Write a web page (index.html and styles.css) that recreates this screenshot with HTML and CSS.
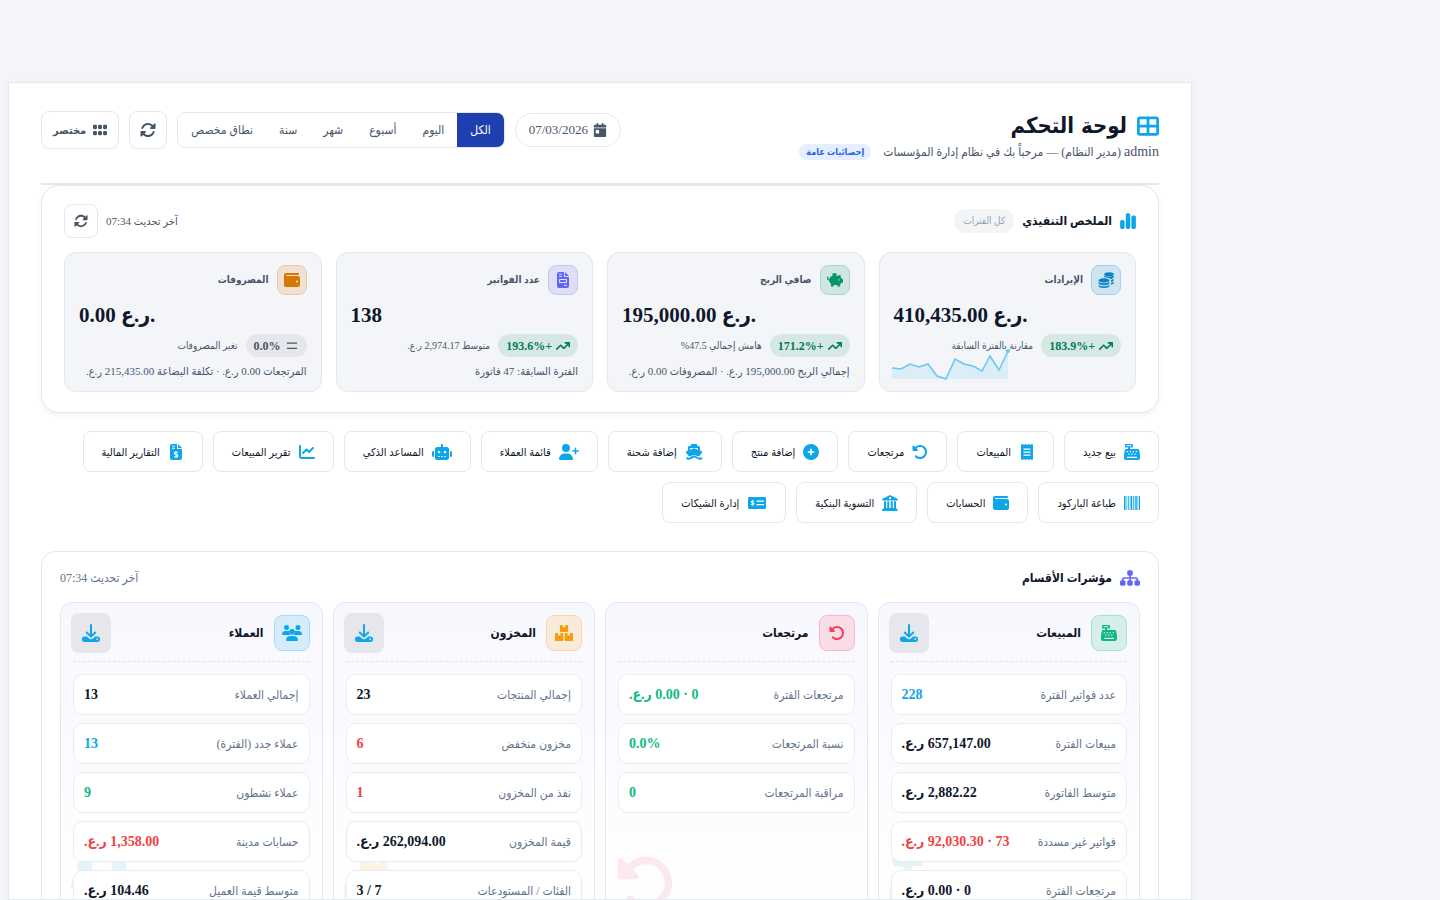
FILE: index.html
```html
<!DOCTYPE html>
<html lang="ar" dir="rtl">
<head>
    <meta charset="UTF-8">
    <meta name="viewport" content="width=device-width, initial-scale=1.0">
    <title>لوحة التحكم</title>
    <link rel="stylesheet" href="styles.css">
</head>
<body>
    <svg class="sprite" aria-hidden="true">
        <symbol id="i-grid" viewBox="0 0 512 512"><path d="M448 96V224H288V96H448zm0 192V416H288V288H448zM224 224H64V96H224V224zM64 288H224V416H64V288zM64 32C28.7 32 0 60.7 0 96V416c0 35.3 28.7 64 64 64H448c35.3 0 64-28.7 64-64V96c0-35.3-28.7-64-64-64H64z" fill-rule="evenodd"/></symbol>
        <symbol id="i-sync" viewBox="0 0 512 512"><path d="M142.9 142.9c62.2-62.2 162.7-62.5 225.3-1L327 183c-6.9 6.9-8.9 17.2-5.2 26.2s12.5 14.8 22.2 14.8H472c13.3 0 24-10.7 24-24V72c0-9.7-5.8-18.5-14.8-22.2s-19.3-1.7-26.2 5.2L413.4 96.6c-87.6-86.5-228.7-86.2-315.8 1C73.2 122 55.6 150.7 44.8 181.4c-5.9 16.7 2.9 34.9 19.5 40.8s34.9-2.9 40.8-19.5c7.7-21.8 20.2-42.3 37.8-59.8zM16 312V440c0 9.7 5.8 18.5 14.8 22.2s19.3 1.7 26.2-5.2l41.6-41.6c87.6 86.5 228.7 86.2 315.8-1c24.4-24.4 42.1-53.1 52.9-83.7c5.9-16.7-2.9-34.9-19.5-40.8s-34.9 2.9-40.8 19.5c-7.7 21.8-20.2 42.3-37.8 59.8c-62.2 62.2-162.7 62.5-225.3 1L185 329c6.9-6.9 8.9-17.2 5.2-26.2s-12.5-14.8-22.2-14.8H40c-13.3 0-24 10.7-24 24z"/></symbol>
        <symbol id="i-undo" viewBox="0 0 512 512"><path d="M48.5 224H40c-13.3 0-24-10.7-24-24V72c0-9.7 5.8-18.5 14.8-22.2s19.3-1.7 26.2 5.2L98.6 96.6c87.6-86.5 228.7-86.2 315.8 1c87.5 87.5 87.5 229.3 0 316.8s-229.3 87.5-316.8 0c-12.5-12.5-12.5-32.8 0-45.3s32.8-12.5 45.3 0c62.5 62.5 163.8 62.5 226.3 0s62.5-163.8 0-226.3c-62.2-62.2-162.7-62.5-225.3-1L185 183c6.9 6.9 8.9 17.2 5.2 26.2s-12.5 14.8-22.2 14.8H48.5z"/></symbol>
        <symbol id="i-dots" viewBox="0 0 512 512"><g><rect x="0" y="64" width="144" height="160" rx="48"/><rect x="184" y="64" width="144" height="160" rx="48"/><rect x="368" y="64" width="144" height="160" rx="48"/><rect x="0" y="288" width="144" height="160" rx="48"/><rect x="184" y="288" width="144" height="160" rx="48"/><rect x="368" y="288" width="144" height="160" rx="48"/></g></symbol>
        <symbol id="i-calendar" viewBox="0 0 448 512"><path d="M128 0c17.7 0 32 14.3 32 32V64H288V32c0-17.7 14.3-32 32-32s32 14.3 32 32V64h48c26.5 0 48 21.5 48 48v48H0V112C0 85.5 21.5 64 48 64H96V32c0-17.7 14.3-32 32-32zM0 192H448V464c0 26.5-21.5 48-48 48H48c-26.5 0-48-21.5-48-48V192zm80 64c-8.8 0-16 7.2-16 16v96c0 8.8 7.2 16 16 16h96c8.8 0 16-7.2 16-16V272c0-8.8-7.2-16-16-16H80z" fill-rule="evenodd"/></symbol>
        <symbol id="i-bars" viewBox="0 0 448 512"><path d="M160 80c0-26.5 21.5-48 48-48h32c26.5 0 48 21.5 48 48V432c0 26.5-21.5 48-48 48H208c-26.5 0-48-21.5-48-48V80zM0 272c0-26.5 21.5-48 48-48H80c26.5 0 48 21.5 48 48V432c0 26.5-21.5 48-48 48H48c-26.5 0-48-21.5-48-48V272zM368 96h32c26.5 0 48 21.5 48 48V432c0 26.5-21.5 48-48 48H368c-26.5 0-48-21.5-48-48V144c0-26.5 21.5-48 48-48z"/></symbol>
        <symbol id="i-coins" viewBox="0 0 512 512"><ellipse cx="352" cy="72" rx="150" ry="64"/><path d="M206 122c42 34 250 34 296 0v30c0 46-56 66-112 68-36-36-92-50-184-46zM414 252c40-4 66-14 88-30v34c0 30-34 50-84 58zM418 344c36-6 64-16 84-30v32c0 30-34 52-84 60z"/><ellipse cx="192" cy="270" rx="176" ry="68"/><path d="M16 318c60 60 292 60 352 0v44c0 80-352 80-352 0zM16 412c60 58 292 58 352 0v36c0 82-352 82-352 0z"/></symbol>
        <symbol id="i-pig" viewBox="0 0 576 512"><ellipse cx="270" cy="62" rx="84" ry="58"/><path d="M410 100c22-24 48-36 78-36v84c24 20 40 42 48 68h24c10 0 16 8 16 18v104c0 10-6 18-16 18h-38c-12 20-28 34-46 46v70c0 14-8 22-22 22h-60c-14 0-22-8-22-22v-40H244v40c0 14-8 22-22 22h-58c-14 0-22-8-22-22v-80c-44-34-66-78-70-124C22 264 0 230 0 190c0-34 26-56 54-56v44c-18 2-20 24-4 38 8 8 18 12 28 10 18-76 78-126 156-126zM432 230a24 24 0 1 0 1 0z" fill-rule="evenodd"/></symbol>
        <symbol id="i-invoice" viewBox="0 0 384 512"><path d="M64 0C29 0 0 29 0 64v384c0 35 29 64 64 64h256c35 0 64-29 64-64V160H256c-18 0-32-14-32-32V0zM256 0v128h128zM64 80h96v-28H64zM64 150h96v-28H64zM96 224h192c18 0 32 14 32 32v64c0 18-14 32-32 32H96c-18 0-32-14-32-32v-64c0-18 14-32 32-32zM100 258v60h184v-60zM224 442h96v-32h-96z" fill-rule="evenodd"/></symbol>
        <symbol id="i-report" viewBox="0 0 384 512"><path d="M64 0C29 0 0 29 0 64v384c0 35 29 64 64 64h256c35 0 64-29 64-64V160H256c-18 0-32-14-32-32V0zM256 0v128h128zM64 80h96v-28H64zM64 150h96v-28H64z" fill-rule="evenodd"/><path class="knock" d="M250 274c-44-26-106-20-106 26 0 54 108 26 108 78 0 48-70 48-112 20M196 228v216"/></symbol>
        <symbol id="i-wallet" viewBox="0 0 512 512"><path d="M64 32C28.7 32 0 60.7 0 96V416c0 35.3 28.7 64 64 64H448c35.3 0 64-28.7 64-64V192c0-35.3-28.7-64-64-64H80c-8.8 0-16-7.2-16-16s7.2-16 16-16H448c17.7 0 32-14.3 32-32s-14.3-32-32-32H64zM416 272a32 32 0 1 1 0 64 32 32 0 1 1 0-64z" fill-rule="evenodd"/></symbol>
        <symbol id="i-trend" viewBox="0 0 576 512"><path d="M384 160c-17.7 0-32-14.3-32-32s14.3-32 32-32H544c17.7 0 32 14.3 32 32V288c0 17.7-14.3 32-32 32s-32-14.3-32-32V205.3L342.6 374.6c-12.5 12.5-32.8 12.5-45.3 0L192 269.3 54.6 406.6c-12.5 12.5-32.8 12.5-45.3 0s-12.5-32.8 0-45.3l160-160c12.5-12.5 32.8-12.5 45.3 0L320 306.7 466.7 160H384z"/></symbol>
        <symbol id="i-equal" viewBox="0 0 448 512"><path d="M40 128h368v48H40zM40 320h368v48H40z"/></symbol>
        <symbol id="i-register" viewBox="0 0 512 512"><path d="M64 0h192c18 0 32 14 32 32v48c0 18-14 32-32 32h-64v48h236c32 0 56 20 62 50l22 150v88c0 36-28 64-64 64H64c-36 0-64-28-64-64v-88l22-150c6-30 30-50 62-50h44v-48H64c-18 0-32-14-32-32V32C32 14 46 0 64 0zM80 40v32h160V40zM88 220v40h40v-40zM184 220v40h40v-40zM280 220v40h40v-40zM376 220v40h40v-40zM136 300v40h40v-40zM232 300v40h40v-40zM328 300v40h40v-40zM96 408v40h320v-40z" fill-rule="evenodd"/></symbol>
        <symbol id="i-receipt" viewBox="0 0 384 512"><path d="M0 16 48 0l48 32 48-32 48 32 48-32 48 32 48-32 48 16v480l-48 16-48-32-48 32-48-32-48 32-48-32-48 32-48-16zM80 144v36h224v-36zM80 240v36h224v-36zM80 336v36h224v-36z" fill-rule="evenodd"/></symbol>
        <symbol id="i-plus" viewBox="0 0 512 512"><path d="M256 512A256 256 0 1 0 256 0a256 256 0 1 0 0 512zM232 344V280H168c-13.3 0-24-10.7-24-24s10.7-24 24-24h64V168c0-13.3 10.7-24 24-24s24 10.7 24 24v64h64c13.3 0 24 10.7 24 24s-10.7 24-24 24H280v64c0 13.3-10.7 24-24 24s-24-10.7-24-24z" fill-rule="evenodd"/></symbol>
        <symbol id="i-ship" viewBox="0 0 576 512"><path d="M220 0h136c20 0 36 14 36 34v30h40c28 0 48 20 48 48v96l50 20c24 10 28 30 12 50l-74 100c-32 24-60 24-100-4-50-34-110-34-160 0-40 28-68 28-100 4L34 278c-16-20-12-40 12-50l50-20v-96c0-28 20-48 48-48h40V34c0-20 16-34 36-34zM160 128v56l128-46 128 46v-56z" fill-rule="evenodd"/><path d="M192 408c60-50 132-50 192 0 44 36 92 40 132 6l40 34c6 30-8 44-28 44-50 16-110 10-156-28-48-40-96-40-144 0-46 38-106 44-156 28-26 0-38-18-32-44l36-34c44 34 72 30 116-6z"/></symbol>
        <symbol id="i-userplus" viewBox="0 0 640 512"><path d="M96 128a128 128 0 1 1 256 0A128 128 0 1 1 96 128zM0 482.3C0 383.8 79.8 304 178.3 304h91.4C368.2 304 448 383.8 448 482.3c0 16.4-13.3 29.7-29.7 29.7H29.7C13.3 512 0 498.7 0 482.3zM504 312V248H440c-13.3 0-24-10.7-24-24s10.7-24 24-24h64V136c0-13.3 10.7-24 24-24s24 10.7 24 24v64h64c13.3 0 24 10.7 24 24s-10.7 24-24 24H552v64c0 13.3-10.7 24-24 24s-24-10.7-24-24z"/></symbol>
        <symbol id="i-robot" viewBox="0 0 640 512"><path d="M320 0c18 0 32 14 32 32v64h120c40 0 72 32 72 72v272c0 40-32 72-72 72H168c-40 0-72-32-72-72V168c0-40 32-72 72-72h120V32c0-18 14-32 32-32zM224 216a40 40 0 1 0 1 0zM416 216a40 40 0 1 0 1 0zM200 384v32h48v-32zM296 384v32h48v-32zM392 384v32h48v-32zM64 224v192H48c-26 0-48-22-48-48v-96c0-26 22-48 48-48zM576 224h16c26 0 48 22 48 48v96c0 26-22 48-48 48h-16z" fill-rule="evenodd"/></symbol>
        <symbol id="i-line" viewBox="0 0 512 512"><path d="M64 64c0-17.7-14.3-32-32-32S0 46.3 0 64V400c0 44.2 35.8 80 80 80H480c17.7 0 32-14.3 32-32s-14.3-32-32-32H80c-8.8 0-16-7.2-16-16V64zm406.6 86.6c12.5-12.5 12.5-32.8 0-45.3s-32.8-12.5-45.3 0L320 210.7l-57.4-57.4c-12.5-12.5-32.8-12.5-45.3 0l-112 112c-12.5 12.5-12.5 32.8 0 45.3s32.8 12.5 45.3 0L240 221.3l57.4 57.4c12.5 12.5 32.8 12.5 45.3 0l128-128z"/></symbol>
        <symbol id="i-barcode" viewBox="0 0 512 512"><path d="M0 32h48v448H0zM80 32h24v448H80zM136 32h32v448h-32zM208 32h56v448h-56zM296 32h32v448h-32zM360 32h48v448h-48zM432 32h24v448h-24zM480 32h32v448h-32z"/></symbol>
        <symbol id="i-bank" viewBox="0 0 512 512"><path d="M243 4c8-5 18-5 26 0l224 112c26 16 20 60-14 60H32c-34 0-40-44-14-60zM256 66a34 34 0 1 0 1 0zM64 200h64v216h40V200h64v216h48V200h64v216h40V200h64v224l44 32c20 16 12 56-18 56H32c-30 0-38-40-18-56l50-32z" fill-rule="evenodd"/></symbol>
        <symbol id="i-check" viewBox="0 0 576 512"><path d="M48 64h480c27 0 48 21 48 48v288c0 27-21 48-48 48H48c-27 0-48-21-48-48V112c0-27 21-48 48-48zM272 176v40h240v-40zM272 284v40h240v-40z" fill-rule="evenodd"/><path class="knock" d="M188 204c-34-20-80-14-80 18 0 38 82 20 82 58 0 36-54 36-86 16M148 160v182"/></symbol>
        <symbol id="i-sitemap" viewBox="0 0 576 512"><path d="M208 80c0-26.5 21.5-48 48-48h64c26.5 0 48 21.5 48 48v64c0 26.5-21.5 48-48 48h-8v40H464c30.9 0 56 25.1 56 56v32h8c26.5 0 48 21.5 48 48v64c0 26.5-21.5 48-48 48H464c-26.5 0-48-21.5-48-48V368c0-26.5 21.5-48 48-48h8V288c0-4.4-3.6-8-8-8H312v40h8c26.5 0 48 21.5 48 48v64c0 26.5-21.5 48-48 48H256c-26.5 0-48-21.5-48-48V368c0-26.5 21.5-48 48-48h8V280H112c-4.4 0-8 3.6-8 8v32h8c26.5 0 48 21.5 48 48v64c0 26.5-21.5 48-48 48H48c-26.5 0-48-21.5-48-48V368c0-26.5 21.5-48 48-48h8V288c0-30.9 25.1-56 56-56H264V192h-8c-26.5 0-48-21.5-48-48V80z"/></symbol>
        <symbol id="i-boxes" viewBox="0 0 576 512"><path d="M192 0h56v78l40-22 40 22V0h56c20 0 36 16 36 36v152c0 20-16 36-36 36H192c-20 0-36-16-36-36V36c0-20 16-36 36-36zM36 256h58v84l40-22 40 22v-84h58c20 0 36 16 36 36v184c0 20-16 36-36 36H36c-20 0-36-16-36-36V292c0-20 16-36 36-36zM344 256h58v84l40-22 40 22v-84h58c20 0 36 16 36 36v184c0 20-16 36-36 36H344c-20 0-36-16-36-36V292c0-20 16-36 36-36z"/></symbol>
        <symbol id="i-users" viewBox="0 0 640 512"><circle cx="144" cy="80" r="80"/><circle cx="512" cy="80" r="80"/><circle cx="320" cy="216" r="92"/><path d="M107 192h86c16 0 30 4 42 10-16 50-2 88 38 118H22c-12 0-22-10-22-22 0-58 48-106 107-106zM447 192h86c59 0 107 48 107 106 0 12-10 22-22 22H367c40-30 54-68 38-118 12-6 26-10 42-10zM262 352h116c74 0 134 60 134 134 0 14-12 26-26 26H154c-14 0-26-12-26-26 0-74 60-134 134-134z"/></symbol>
        <symbol id="i-download" viewBox="0 0 512 512"><path d="M64 352h72l56 56c36 36 92 36 128 0l56-56h72c36 0 64 28 64 64v32c0 36-28 64-64 64H64c-36 0-64-28-64-64v-32c0-36 28-64 64-64zM432 408a24 24 0 1 0 1 0z" fill-rule="evenodd"/><path class="stroke" d="M256 28v320M136 240l120 118 120-118"/></symbol>
    </svg>

    <main class="dashboard">
        <header class="page-header">
            <div class="page-heading">
                <h1><svg class="icon icon-title"><use href="#i-grid"/></svg>لوحة التحكم</h1>
                <div class="subtitle">
                    <span><span class="user">admin</span> (مدير النظام) — مرحباً بك في نظام إدارة المؤسسات</span>
                    <span class="tag">إحصائيات عامة</span>
                </div>
            </div>
            <div class="toolbar">
                <span class="date-pill"><svg class="icon icon-sm"><use href="#i-calendar"/></svg>07/03/2026</span>
                <div class="periods">
                    <button type="button" class="active">الكل</button>
                    <button type="button">اليوم</button>
                    <button type="button">أسبوع</button>
                    <button type="button">شهر</button>
                    <button type="button">سنة</button>
                    <button type="button">نطاق مخصص</button>
                </div>
                <button type="button" class="tool-btn square" aria-label="تحديث"><svg class="icon"><use href="#i-sync"/></svg></button>
                <button type="button" class="tool-btn"><svg class="icon icon-sm"><use href="#i-dots"/></svg>مختصر</button>
            </div>
        </header>

        <section class="summary">
            <div class="section-head">
                <h2><svg class="icon icon-bars sky"><use href="#i-bars"/></svg>الملخص التنفيذي</h2>
                <span class="scope">كل الفترات</span>
                <span class="updated dark">آخر تحديث 07:34</span>
                <button type="button" class="tool-btn small" aria-label="تحديث الملخص"><svg class="icon icon-sm"><use href="#i-sync"/></svg></button>
            </div>
            <div class="metrics">
                <article class="metric">
                    <div class="metric-head"><span class="badge blue"><svg class="icon"><use href="#i-coins"/></svg></span><h3>الإيرادات</h3></div>
                    <div class="amount" dir="ltr">410,435.00 ر.ع.</div>
                    <div class="trend"><span class="chip up"><svg class="icon icon-sm"><use href="#i-trend"/></svg>+183.9%</span><span>مقارنة بالفترة السابقة</span></div>
                    <svg class="sparkline" viewBox="0 0 120 32">
                        <path d="M1 20 10 21 19 16 28 19 37 16 46 28 55 31 64 11 73 16 82 18 91 23 99 8 108 22 117 3V31H1z" fill="#0ea5e9" opacity=".1"/>
                        <path d="M1 20 10 21 19 16 28 19 37 16 46 28 55 31 64 11 73 16 82 18 91 23 99 8 108 22 117 3" fill="none" stroke="#64c8f5" stroke-width="1.5"/>
                        <circle cx="117" cy="3" r="2" fill="#64c8f5"/>
                    </svg>
                </article>
                <article class="metric">
                    <div class="metric-head"><span class="badge green"><svg class="icon"><use href="#i-pig"/></svg></span><h3>صافي الربح</h3></div>
                    <div class="amount" dir="ltr">195,000.00 ر.ع.</div>
                    <div class="trend"><span class="chip up"><svg class="icon icon-sm"><use href="#i-trend"/></svg>+171.2%</span><span>هامش إجمالي 47.5%</span></div>
                    <p>إجمالي الربح 195,000.00 ر.ع. · المصروفات 0.00 ر.ع.</p>
                </article>
                <article class="metric">
                    <div class="metric-head"><span class="badge indigo"><svg class="icon"><use href="#i-invoice"/></svg></span><h3>عدد الفواتير</h3></div>
                    <div class="amount" dir="ltr">138</div>
                    <div class="trend"><span class="chip up"><svg class="icon icon-sm"><use href="#i-trend"/></svg>+193.6%</span><span>متوسط 2,974.17 ر.ع.</span></div>
                    <p>الفترة السابقة: 47 فاتورة</p>
                </article>
                <article class="metric">
                    <div class="metric-head"><span class="badge orange"><svg class="icon"><use href="#i-wallet"/></svg></span><h3>المصروفات</h3></div>
                    <div class="amount" dir="ltr">0.00 ر.ع.</div>
                    <div class="trend"><span class="chip"><svg class="icon icon-sm"><use href="#i-equal"/></svg>0.0%</span><span>تغير المصروفات</span></div>
                    <p>المرتجعات 0.00 ر.ع. · تكلفة البضاعة 215,435.00 ر.ع.</p>
                </article>
            </div>
        </section>

        <nav class="quick">
            <a href="#"><svg class="icon"><use href="#i-register"/></svg>بيع جديد</a>
            <a href="#"><svg class="icon"><use href="#i-receipt"/></svg>المبيعات</a>
            <a href="#"><svg class="icon"><use href="#i-undo"/></svg>مرتجعات</a>
            <a href="#"><svg class="icon"><use href="#i-plus"/></svg>إضافة منتج</a>
            <a href="#"><svg class="icon icon-ship"><use href="#i-ship"/></svg>إضافة شحنة</a>
            <a href="#"><svg class="icon icon-wide"><use href="#i-userplus"/></svg>قائمة العملاء</a>
            <a href="#"><svg class="icon icon-wide"><use href="#i-robot"/></svg>المساعد الذكي</a>
            <a href="#"><svg class="icon"><use href="#i-line"/></svg>تقرير المبيعات</a>
            <a href="#"><svg class="icon"><use href="#i-report"/></svg>التقارير المالية</a>
            <a href="#"><svg class="icon"><use href="#i-barcode"/></svg>طباعة الباركود</a>
            <a href="#"><svg class="icon"><use href="#i-wallet"/></svg>الحسابات</a>
            <a href="#"><svg class="icon"><use href="#i-bank"/></svg>التسوية البنكية</a>
            <a href="#"><svg class="icon icon-wide"><use href="#i-check"/></svg>إدارة الشيكات</a>
        </nav>

        <section class="departments">
            <div class="section-head">
                <h2><svg class="icon icon-head violet"><use href="#i-sitemap"/></svg>مؤشرات الأقسام</h2>
                <span class="updated">آخر تحديث 07:34</span>
            </div>
            <div class="columns">
                <article class="column">
                    <svg class="watermark emerald"><use href="#i-register"/></svg>
                    <div class="column-head">
                        <span class="badge large emerald"><svg class="icon"><use href="#i-register"/></svg></span>
                        <h3>المبيعات</h3>
                        <button type="button" class="download" aria-label="تنزيل المبيعات"><svg class="icon"><use href="#i-download"/></svg></button>
                    </div>
                    <dl>
                        <div><dt>عدد فواتير الفترة</dt><dd class="info">228</dd></div>
                        <div><dt>مبيعات الفترة</dt><dd>657,147.00 ر.ع.</dd></div>
                        <div><dt>متوسط الفاتورة</dt><dd>2,882.22 ر.ع.</dd></div>
                        <div><dt>فواتير غير مسددة</dt><dd class="bad">73 · 92,030.30 ر.ع.</dd></div>
                        <div><dt>مرتجعات الفترة</dt><dd>0 · 0.00 ر.ع.</dd></div>
                    </dl>
                </article>
                <article class="column">
                    <svg class="watermark rose"><use href="#i-undo"/></svg>
                    <div class="column-head">
                        <span class="badge large rose"><svg class="icon"><use href="#i-undo"/></svg></span>
                        <h3>مرتجعات</h3>
                    </div>
                    <dl>
                        <div><dt>مرتجعات الفترة</dt><dd class="good">0 · 0.00 ر.ع.</dd></div>
                        <div><dt>نسبة المرتجعات</dt><dd class="good">0.0%</dd></div>
                        <div><dt>مراقبة المرتجعات</dt><dd class="good">0</dd></div>
                    </dl>
                </article>
                <article class="column">
                    <svg class="watermark amber"><use href="#i-boxes"/></svg>
                    <div class="column-head">
                        <span class="badge large amber"><svg class="icon icon-wide"><use href="#i-boxes"/></svg></span>
                        <h3>المخزون</h3>
                        <button type="button" class="download" aria-label="تنزيل المخزون"><svg class="icon"><use href="#i-download"/></svg></button>
                    </div>
                    <dl>
                        <div><dt>إجمالي المنتجات</dt><dd>23</dd></div>
                        <div><dt>مخزون منخفض</dt><dd class="bad">6</dd></div>
                        <div><dt>نفذ من المخزون</dt><dd class="bad">1</dd></div>
                        <div><dt>قيمة المخزون</dt><dd>262,094.00 ر.ع.</dd></div>
                        <div><dt>الفئات / المستودعات</dt><dd>7 / 3</dd></div>
                    </dl>
                </article>
                <article class="column">
                    <svg class="watermark sky"><use href="#i-users"/></svg>
                    <div class="column-head">
                        <span class="badge large sky"><svg class="icon icon-wide"><use href="#i-users"/></svg></span>
                        <h3>العملاء</h3>
                        <button type="button" class="download" aria-label="تنزيل العملاء"><svg class="icon"><use href="#i-download"/></svg></button>
                    </div>
                    <dl>
                        <div><dt>إجمالي العملاء</dt><dd>13</dd></div>
                        <div><dt>عملاء جدد (الفترة)</dt><dd class="info">13</dd></div>
                        <div><dt>عملاء نشطون</dt><dd class="good">9</dd></div>
                        <div><dt>حسابات مدينة</dt><dd class="bad">1,358.00 ر.ع.</dd></div>
                        <div><dt>متوسط قيمة العميل</dt><dd>104.46 ر.ع.</dd></div>
                    </dl>
                </article>
            </div>
        </section>
    </main>
</body>
</html>
```
FILE: styles.css
```css
* {
    box-sizing: border-box;
}
body {
    margin: 0;
    padding: 82px 248px 0 8px;
    background: #f3f5f9;
    color: #0f172a;
    font-family: "Liberation Serif", "DejaVu Sans Condensed", serif;
    font-size: 12px;
    line-height: 20px;
}
h1, h2, h3, p, dl, dd {
    margin: 0;
}
button {
    font: inherit;
    color: #475569;
    background: #fff;
    border: 1px solid #e2e8f0;
    cursor: pointer;
}
.sprite {
    display: none;
}
.icon {
    width: 16px;
    height: 16px;
    fill: currentColor;
    flex: none;
}
.icon-sm {
    width: 14px;
    height: 14px;
}
.icon-ship {
    width: 18px;
}
.icon-wide {
    width: 20px;
}
.icon-head {
    width: 20px;
    height: 18px;
}
.icon-bars {
    height: 18px;
}
.icon-title {
    width: 22px;
    height: 22px;
    color: #0ea5e9;
}
.knock {
    fill: none;
    stroke: #fff;
    stroke-width: 34;
}
.stroke {
    fill: none;
    stroke: currentColor;
    stroke-width: 56;
    stroke-linecap: round;
    stroke-linejoin: round;
}
.dashboard {
    height: calc(100vh - 82px);
    overflow: hidden;
    padding: 28px 32px;
    background: #fff;
    border: 1px solid #e2e8f0;
    box-shadow: 0 2px 8px rgba(15, 23, 42, 0.05);
}

/* header */
.page-header {
    display: flex;
    justify-content: space-between;
    align-items: flex-start;
    padding-bottom: 20px;
    border-bottom: 2px solid #e2e8f0;
}
h1 {
    display: flex;
    align-items: center;
    gap: 10px;
    font-family: "DejaVu Sans Condensed", sans-serif;
    font-size: 22px;
    line-height: 30px;
}
.subtitle {
    display: flex;
    align-items: center;
    gap: 12px;
    color: #475569;
    font-size: 12px;
    line-height: 22px;
}
.user {
    font-size: 14px;
}
.tag {
    padding: 0 7px;
    border-radius: 8px;
    background: #e6efff;
    color: #2563eb;
    font-size: 9px;
    font-weight: bold;
    line-height: 16px;
}
.toolbar {
    display: flex;
    align-items: center;
    gap: 10px;
}
.date-pill {
    display: flex;
    align-items: center;
    gap: 5px;
    height: 34px;
    padding: 0 13px;
    border: 1px solid #e2e8f0;
    border-radius: 17px;
    color: #475569;
    font-size: 13px;
}
.periods {
    display: flex;
    height: 36px;
    overflow: hidden;
    border: 1px solid #e2e8f0;
    border-radius: 8px;
}
.periods button {
    padding: 0 13px;
    border: 0;
    font-size: 12px;
}
.periods .active {
    background: #1e40af;
    color: #fff;
}
.tool-btn {
    display: flex;
    align-items: center;
    justify-content: center;
    gap: 7px;
    height: 38px;
    padding: 0 11px;
    border-radius: 8px;
    font-size: 11px;
    font-weight: bold;
}
.tool-btn.square {
    width: 38px;
    padding: 0;
}
.tool-btn.small {
    width: 34px;
    height: 34px;
    padding: 0;
}

/* summary */
.summary {
    padding: 18px 22px 20px;
    border: 1px solid #e2e8f0;
    border-radius: 18px;
    box-shadow: 0 2px 6px rgba(15, 23, 42, 0.06);
}
.section-head {
    display: flex;
    align-items: center;
    gap: 8px;
}
.section-head h2 {
    display: flex;
    align-items: center;
    gap: 8px;
    font-size: 12px;
}
.scope {
    padding: 2px 9px;
    border-radius: 12px;
    background: #f3f4f6;
    color: #94a3b8;
    font-size: 10px;
}
.updated {
    margin-right: auto;
    color: #64748b;
    font-size: 11px;
}
.updated.dark {
    color: #475569;
}
.metrics {
    display: grid;
    grid-template-columns: repeat(4, 1fr);
    gap: 14px;
    margin-top: 14px;
}
.metric {
    position: relative;
    height: 140px;
    padding: 12px 14px;
    border: 1px solid #e2e8f0;
    border-radius: 12px;
    background: #f3f5f9;
    color: #475569;
    white-space: nowrap;
}
.metric-head {
    display: flex;
    align-items: center;
    gap: 8px;
}
.metric h3 {
    font-size: 10px;
}
.badge {
    display: flex;
    align-items: center;
    justify-content: center;
    width: 30px;
    height: 30px;
    border: 1px solid;
    border-radius: 8px;
}
.badge.large {
    width: 36px;
    height: 36px;
}
.badge.blue {
    color: #0284c7;
    background: #d0e3f0;
    border-color: #a5d0eb;
}
.badge.green {
    color: #059669;
    background: #d1e6e2;
    border-color: #a5d9c8;
}
.badge.indigo {
    color: #6366f1;
    background: #dedff7;
    border-color: #c3c4f5;
}
.badge.orange {
    color: #d97706;
    background: #efe2d4;
    border-color: #ecc99d;
}
.emerald {
    color: #10b981;
}
.rose {
    color: #f43f5e;
}
.amber {
    color: #f59e0b;
}
.sky {
    color: #0ea5e9;
}
.violet {
    color: #6366f1;
}
.badge.emerald {
    background: #d6efeb;
    border-color: #a8e2cf;
}
.badge.rose {
    background: #f8dde6;
    border-color: #f9b7c6;
}
.badge.amber {
    background: #f8ebdc;
    border-color: #f8d9a5;
}
.badge.sky {
    background: #d6ecfa;
    border-color: #a6dcf8;
}
.amount {
    color: #0f172a;
    font-size: 21px;
    font-weight: bold;
    line-height: 26px;
    margin: 7px 0 6px;
}
.trend {
    display: flex;
    align-items: center;
    gap: 8px;
    font-size: 10px;
}
.chip {
    display: flex;
    align-items: center;
    gap: 4px;
    height: 23px;
    padding: 0 8px;
    border-radius: 12px;
    background: #e5e7eb;
    color: #475569;
    font-size: 12px;
    font-weight: bold;
}
.chip.up {
    background: #d6e8e4;
    color: #047857;
}
.metric p {
    margin-top: 4px;
    font-size: 11px;
}
.sparkline {
    position: absolute;
    left: 11px;
    bottom: 11px;
    width: 120px;
    height: 32px;
}

/* quick links */
.quick {
    display: flex;
    flex-wrap: wrap;
    gap: 10px;
    margin: 18px 0 28px;
}
.quick a {
    display: flex;
    align-items: center;
    gap: 8px;
    height: 41px;
    padding: 0 18px;
    border: 1px solid #e2e8f0;
    border-radius: 8px;
    color: #0f172a;
    font-size: 11px;
    text-decoration: none;
}
.quick .icon {
    color: #0ea5e9;
}

/* departments */
.departments {
    padding: 16px 18px;
    border: 1px solid #e2e8f0;
    border-radius: 14px;
}
.departments .updated {
    font-size: 12px;
}
.columns {
    display: grid;
    grid-template-columns: repeat(4, 1fr);
    gap: 10px;
    margin-top: 14px;
}
.column {
    position: relative;
    padding: 12px;
    border: 1px solid #e2e8f0;
    border-radius: 12px;
    background: linear-gradient(#f7f8fd, #faf9ff 30%, #fff);
}
.column-head {
    display: flex;
    align-items: center;
    gap: 10px;
    height: 47px;
    padding-bottom: 10px;
    margin-bottom: 12px;
    border-bottom: 1px dashed #dbe3ec;
}
.column h3 {
    font-size: 12px;
}
.download {
    display: flex;
    align-items: center;
    justify-content: center;
    width: 40px;
    height: 40px;
    margin: 0 auto 0 -2px;
    border: 0;
    border-radius: 8px;
    background: #e5e7ec;
    color: #0ea5e9;
}
.download .icon {
    width: 18px;
    height: 18px;
}
.column dl {
    position: relative;
    display: grid;
    gap: 8px;
}
.column dl div {
    display: flex;
    align-items: center;
    justify-content: space-between;
    height: 41px;
    padding: 0 10px;
    border: 1px solid #e8edf3;
    border-radius: 10px;
    background: #fff;
    white-space: nowrap;
}
.column dt {
    color: #64748b;
    font-size: 12px;
}
.column dd {
    font-size: 14px;
    font-weight: bold;
}
.column .info {
    color: #0ea5e9;
}
.column .good {
    color: #10b981;
}
.column .bad {
    color: #ef4444;
}
.watermark {
    position: absolute;
    left: 10px;
    bottom: 10px;
    width: 60px;
    height: 60px;
    fill: currentColor;
    opacity: 0.1;
}
```
